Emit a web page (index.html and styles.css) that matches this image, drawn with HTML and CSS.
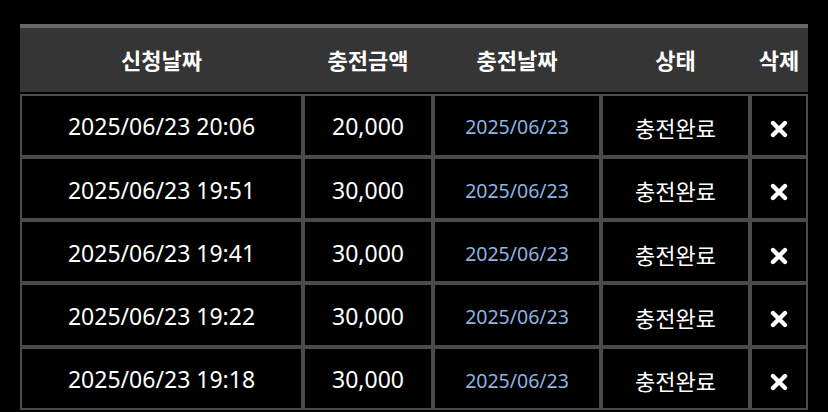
FILE: index.html
```html
<!DOCTYPE html>
<html lang="ko">
<head>
    <meta charset="UTF-8">
    <meta name="viewport" content="width=device-width, initial-scale=1.0">
    <title>충전내역</title>
    <link rel="stylesheet" href="styles.css">
</head>
<body>
    <table class="charge-table">
        <colgroup>
            <col class="col-req">
            <col class="col-amount">
            <col class="col-date">
            <col class="col-state">
            <col class="col-del">
        </colgroup>
        <thead>
            <tr>
                <th>신청날짜</th>
                <th>충전금액</th>
                <th>충전날짜</th>
                <th>상태</th>
                <th>삭제</th>
            </tr>
        </thead>
        <tbody>
            <tr>
                <td>2025/06/23 20:06</td>
                <td>20,000</td>
                <td class="paid-date">2025/06/23</td>
                <td class="state">충전완료</td>
                <td><button class="del-btn"><svg viewBox="0 0 18 18" width="18" height="18"><path d="M3 3 L15 15 M15 3 L3 15" /></svg></button></td>
            </tr>
            <tr>
                <td>2025/06/23 19:51</td>
                <td>30,000</td>
                <td class="paid-date">2025/06/23</td>
                <td class="state">충전완료</td>
                <td><button class="del-btn"><svg viewBox="0 0 18 18" width="18" height="18"><path d="M3 3 L15 15 M15 3 L3 15" /></svg></button></td>
            </tr>
            <tr>
                <td>2025/06/23 19:41</td>
                <td>30,000</td>
                <td class="paid-date">2025/06/23</td>
                <td class="state">충전완료</td>
                <td><button class="del-btn"><svg viewBox="0 0 18 18" width="18" height="18"><path d="M3 3 L15 15 M15 3 L3 15" /></svg></button></td>
            </tr>
            <tr>
                <td>2025/06/23 19:22</td>
                <td>30,000</td>
                <td class="paid-date">2025/06/23</td>
                <td class="state">충전완료</td>
                <td><button class="del-btn"><svg viewBox="0 0 18 18" width="18" height="18"><path d="M3 3 L15 15 M15 3 L3 15" /></svg></button></td>
            </tr>
            <tr>
                <td>2025/06/23 19:18</td>
                <td>30,000</td>
                <td class="paid-date">2025/06/23</td>
                <td class="state">충전완료</td>
                <td><button class="del-btn"><svg viewBox="0 0 18 18" width="18" height="18"><path d="M3 3 L15 15 M15 3 L3 15" /></svg></button></td>
            </tr>
        </tbody>
    </table>
</body>
</html>
```

FILE: styles.css
```css
body {
    margin: 24px 20px 0;
    background: #000;
    color: #fff;
    font-family: 'Noto Sans', 'Noto Sans CJK KR', sans-serif;
}
.charge-table {
    width: 788px;
    table-layout: fixed;
    border-collapse: separate;
    border-spacing: 0;
}
.col-req { width: 283px; }
.col-amount { width: 130px; }
.col-date { width: 168px; }
.col-state { width: 149px; }
.col-del { width: 58px; }
.charge-table th {
    height: 61.5px;
    padding: 0 0 2px;
    background: #353535;
    border-top: 4px solid #676767;
    border-bottom: 2px solid #000;
    font-family: 'Noto Sans CJK KR', sans-serif;
    font-size: 22px;
    font-weight: 700;
    line-height: 1.2;
    text-align: center;
}
.charge-table td {
    height: 55.3px;
    padding: 4px 0 0;
    border: 2px solid #4b4b4b;
    font-size: 23px;
    line-height: 1.3;
    text-align: center;
    vertical-align: middle;
}
.charge-table .state {
    font-family: 'Noto Sans CJK KR', sans-serif;
    font-size: 22px;
    line-height: 1.2;
}
.charge-table .paid-date {
    color: #8db3e2;
    font-size: 19.5px;
}
.del-btn {
    padding: 0;
    border: none;
    background: none;
    cursor: pointer;
    display: inline-flex;
    vertical-align: middle;
}
.del-btn path {
    fill: none;
    stroke: #fff;
    stroke-width: 4.4;
    stroke-linecap: round;
}
```
